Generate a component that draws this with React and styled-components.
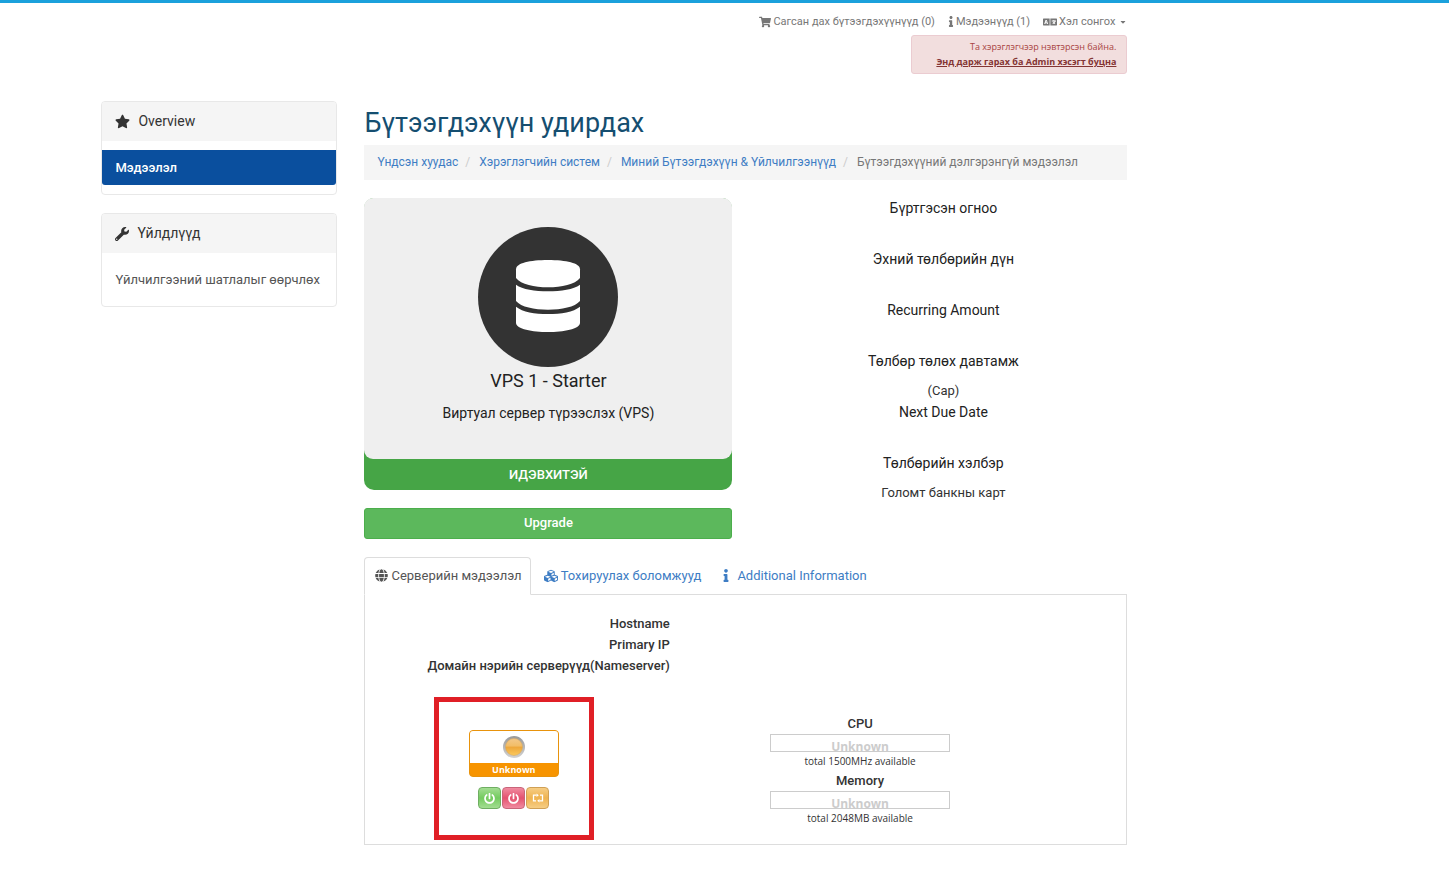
import styled, { createGlobalStyle } from "styled-components"
import { FaShoppingCart, FaInfo, FaLanguage, FaStar, FaWrench, FaGlobe, FaCubes, FaPowerOff, FaCaretDown } from "react-icons/fa"

const GlobalStyle = createGlobalStyle`
    * {
        box-sizing: border-box;
    }
    body {
        margin: 0;
        background: #fff;
        color: #333;
        font-family: Roboto, "Liberation Sans", sans-serif;
        font-size: 13px;
        line-height: 21px;
    }
    a {
        text-decoration: none;
    }
    button {
        font-family: inherit;
        cursor: pointer;
    }
`

const Page = styled.div`
    border-top: 3px solid #1ba1dc;
    padding: 0 20px 32px 7%;
`

const Container = styled.div`
    max-width: 1026px;
`

const Header = styled.header`
    display: flex;
    flex-direction: column;
    align-items: flex-end;
    padding-top: 8px;
    margin-bottom: 27px;
`

const TopNav = styled.nav`
    display: flex;
    gap: 13px;
    margin-bottom: 3px;
`

const TopLink = styled.a`
    display: flex;
    align-items: center;
    gap: 2px;
    color: #777;
    font-size: 11px;
`

const InfoIcon = styled(FaInfo)`
    width: 6px;
`

const Caret = styled(FaCaretDown)`
    margin-left: 2px;
`

const AdminAlert = styled.div`
    width: 216px;
    padding: 3px 10px 4px;
    border: 1px solid #ebccd1;
    border-radius: 3px;
    background: #f2dede;
    color: #a94442;
    font-family: "Open Sans", "Noto Sans", sans-serif;
    font-size: 9px;
    line-height: 15px;
    text-align: right;
`

const AlertLink = styled.a`
    display: block;
    color: #843534;
    font-weight: 700;
    text-decoration: underline;
    white-space: nowrap;
`

const Layout = styled.div`
    display: grid;
    grid-template-columns: 236px minmax(0, 1fr);
    gap: 27px;
    align-items: start;
`

const Sidebar = styled.aside`
    display: flex;
    flex-direction: column;
    gap: 18px;
`

const Panel = styled.section`
    border: 1px solid #e8e8e8;
    border-radius: 4px;
    padding-bottom: 9px;
    overflow: hidden;
`

const PanelTitle = styled.h3`
    display: flex;
    align-items: center;
    gap: 8px;
    height: 39px;
    margin: 0 0 9px;
    padding: 0 13px;
    background: #f5f5f5;
    font-size: 14px;
    font-weight: 400;
`

const PanelItem = styled.a`
    display: block;
    padding: 7px 13px;
    border-radius: 0 0 3px 3px;
    background: ${(props) => (props.$active ? "#0a4f9e" : "transparent")};
    color: ${(props) => (props.$active ? "#fff" : "#555")};
    font-weight: ${(props) => (props.$active ? 500 : 400)};
`

const Title = styled.h1`
    margin: 0;
    color: #154e70;
    font-size: 27px;
    font-weight: 400;
    line-height: 44px;
`

const Breadcrumb = styled.ol`
    display: flex;
    margin: 0 0 18px;
    padding: 7px 13px;
    background: #f5f5f5;
    color: #777;
    font-size: 12px;
    list-style: none;
`

const Crumb = styled.li`
    & + &::before {
        content: "/";
        padding: 0 9px 0 7px;
        color: #ccc;
    }
    a {
        color: #3e7dc4;
    }
`

const Details = styled.div`
    display: grid;
    grid-template-columns: 1fr 1fr;
    gap: 27px;
    margin-bottom: 18px;
    text-align: center;
`

const Product = styled.div`
    margin-bottom: 18px;
    border-radius: 10px;
    background: #46a546;
`

const ProductIcon = styled.div`
    height: 261px;
    padding-top: 29px;
    border-radius: 9px;
    background: #efefef;
    svg {
        display: block;
        margin: 0 auto;
    }
`

const ProductName = styled.h3`
    margin: 4px 0 12px;
    color: #222;
    font-size: 18px;
    font-weight: 400;
    line-height: 20px;
`

const GroupName = styled.h4`
    margin: 0;
    color: #222;
    font-size: 14px;
    font-weight: 400;
    line-height: 20px;
`

const Status = styled.div`
    padding: 5px 0;
    color: #fff;
    font-weight: 500;
`

const UpgradeButton = styled.button`
    width: 100%;
    height: 31px;
    padding: 0 0 2px;
    border: 1px solid #4cae4c;
    border-radius: 3px;
    background: #5cb85c;
    color: #fff;
    font-size: 13px;
    font-weight: 500;
`

const Billing = styled.dl`
    margin: 0;
    dt {
        margin-bottom: 9px;
        color: #222;
        font-size: 14px;
        line-height: 20px;
    }
    dd {
        min-height: 22px;
        margin: 0;
    }
`

const Tabs = styled.nav`
    display: flex;
    gap: 2px;
    border-bottom: 1px solid #ddd;
`

const Tab = styled.a`
    display: flex;
    align-items: center;
    gap: ${(props) => props.$gap || 3}px;
    height: 38px;
    margin-bottom: -1px;
    padding: 0 8px 1px 10px;
    border: 1px solid;
    border-color: ${(props) => (props.$active ? "#ddd #ddd #fff" : "transparent transparent #ddd")};
    border-radius: 4px 4px 0 0;
    color: ${(props) => (props.$active ? "#555" : "#3e7dc4")};
`

const TabPanel = styled.div`
    padding: 18px 0 4px;
    border: 1px solid #ddd;
    border-top: 0;
`

const HostInfo = styled.dl`
    width: 40%;
    margin: 0 0 21px;
    text-align: right;
    font-weight: 500;
`

const Server = styled.div`
    display: grid;
    grid-template-columns: 39% 52%;
    justify-items: center;
`

const ControlBox = styled.div`
    display: flex;
    flex-direction: column;
    align-items: center;
    gap: 10px;
    width: 160px;
    height: 143px;
    padding-top: 28px;
    border: 5px solid #e01f26;
`

const StatusBox = styled.div`
    width: 90px;
    border: 1px solid #e8930c;
    border-radius: 4px;
    background: #f79400;
    color: #fff;
    font-family: "Open Sans", sans-serif;
    font-size: 9px;
    font-weight: 700;
    line-height: 13px;
    text-align: center;
    overflow: hidden;
`

const LampArea = styled.div`
    display: flex;
    justify-content: center;
    padding: 5px 0;
    background: #fff;
`

const Controls = styled.div`
    display: flex;
    gap: 1px;
`

const ControlButton = styled.button`
    display: flex;
    align-items: center;
    justify-content: center;
    width: 23px;
    height: 22px;
    padding: 0;
    border: 1px solid ${(props) => props.$edge};
    border-radius: 4px;
    background: linear-gradient(${(props) => props.$light}, ${(props) => props.$dark} 50%, ${(props) => props.$light});
    color: #fff;
`

const Usage = styled.div`
    width: 180px;
    padding-top: 16px;
    text-align: center;
`

const UsageLabel = styled.div`
    font-weight: 500;
`

const UsageBar = styled.div`
    display: flex;
    align-items: flex-end;
    justify-content: center;
    height: 18px;
    border: 1px solid #ccc;
    color: #ccc;
    font-family: "Open Sans", sans-serif;
    font-size: 12px;
    font-weight: 700;
    line-height: 9px;
`

const UsageTotal = styled.div`
    font-family: "Open Sans", sans-serif;
    font-size: 10px;
    line-height: 18px;
`

const billing = [
    ["Бүртгэсэн огноо", ""],
    ["Эхний төлбөрийн дүн", ""],
    ["Recurring Amount", ""],
    ["Төлбөр төлөх давтамж", "(Сар)"],
    ["Next Due Date", ""],
    ["Төлбөрийн хэлбэр", "Голомт банкны карт"],
]

const usage = [
    { label: "CPU", total: "total 1500MHz available" },
    { label: "Memory", total: "total 2048MB available" },
]

function DatabaseIcon() {
    return (
        <svg width="140" height="140" viewBox="0 0 420 420">
            <circle cx="210" cy="210" r="210" fill="#333" />
            <g fill="#fff">
                <path d="M114 127C114 108 156 99 210 99S306 108 306 127V153C291 172 251 181 210 181S129 172 114 153Z" />
                <path d="M114 173C134 187 170 193 210 193S286 187 306 173V222C291 240 251 248 210 248S129 240 114 222Z" />
                <path d="M114 239C134 255 170 261 210 261S286 255 306 239V287C306 306 256 315 210 315S114 306 114 287Z" />
            </g>
        </svg>
    )
}

function Lamp() {
    return (
        <svg width="22" height="22" viewBox="0 0 22 22">
            <defs>
                <linearGradient id="lampRing" x1="0" y1="0" x2="0" y2="1">
                    <stop offset="0" stopColor="#999" />
                    <stop offset="1" stopColor="#d2d2d2" />
                </linearGradient>
                <linearGradient id="lampGlass" x1="0" y1="0" x2="0" y2="1">
                    <stop offset="0" stopColor="#f3c88a" />
                    <stop offset="0.45" stopColor="#f2bd66" />
                    <stop offset="0.5" stopColor="#eda63a" />
                    <stop offset="1" stopColor="#fbc95c" />
                </linearGradient>
            </defs>
            <circle cx="11" cy="11" r="11" fill="url(#lampRing)" />
            <circle cx="11" cy="11" r="8.5" fill="url(#lampGlass)" stroke="#d6a65c" strokeWidth="0.5" />
        </svg>
    )
}

function RebootIcon() {
    return (
        <svg width="12" height="10" viewBox="0 0 12 10" fill="none" stroke="#fff" strokeWidth="1.3">
            <path d="M4 7.8H1.5V2.2H4.5M8 2.2H10.5V7.8H7.5" />
            <path d="M4.5 0.4L6.8 2.2L4.5 4ZM7.5 6L5.2 7.8L7.5 9.6Z" fill="#fff" stroke="none" />
        </svg>
    )
}

export default function App() {
    return (
        <>
        <GlobalStyle />
        <Page>
        <Container>
            <Header>
                <TopNav>
                    <TopLink href="#cart"><FaShoppingCart size={12} />Сагсан дах бүтээгдэхүүнүүд (0)</TopLink>
                    <TopLink href="#news"><InfoIcon size={11} />Мэдээнүүд (1)</TopLink>
                    <TopLink href="#language"><FaLanguage size={14} />Хэл сонгох<Caret size={8} /></TopLink>
                </TopNav>
                <AdminAlert>
                    Та хэрэглэгчээр нэвтэрсэн байна.
                    <AlertLink href="#admin">Энд дарж гарах ба Admin хэсэгт буцна</AlertLink>
                </AdminAlert>
            </Header>
            <Layout>
                <Sidebar>
                    <Panel>
                        <PanelTitle><FaStar size={15} />Overview</PanelTitle>
                        <PanelItem href="#info" $active>Мэдээлэл</PanelItem>
                    </Panel>
                    <Panel>
                        <PanelTitle><FaWrench size={14} />Үйлдлүүд</PanelTitle>
                        <PanelItem href="#upgrade">Үйлчилгээний шатлалыг өөрчлөх</PanelItem>
                    </Panel>
                </Sidebar>
                <main>
                    <Title>Бүтээгдэхүүн удирдах</Title>
                    <Breadcrumb>
                        <Crumb><a href="#home">Үндсэн хуудас</a></Crumb>
                        <Crumb><a href="#client">Хэрэглэгчийн систем</a></Crumb>
                        <Crumb><a href="#products">Миний Бүтээгдэхүүн &amp; Үйлчилгээнүүд</a></Crumb>
                        <Crumb>Бүтээгдэхүүний дэлгэрэнгүй мэдээлэл</Crumb>
                    </Breadcrumb>
                    <Details>
                        <div>
                            <Product>
                                <ProductIcon>
                                    <DatabaseIcon />
                                    <ProductName>VPS 1 - Starter</ProductName>
                                    <GroupName>Виртуал сервер түрээслэх (VPS)</GroupName>
                                </ProductIcon>
                                <Status>ИДЭВХИТЭЙ</Status>
                            </Product>
                            <UpgradeButton type="button">Upgrade</UpgradeButton>
                        </div>
                        <Billing>
                            {billing.map(([label, value]) => (
                                <div key={label}>
                                    <dt>{label}</dt>
                                    <dd>{value}</dd>
                                </div>
                            ))}
                        </Billing>
                    </Details>
                    <Tabs>
                        <Tab href="#server" $active><FaGlobe size={13} />Серверийн мэдээлэл</Tab>
                        <Tab href="#options"><FaCubes size={14} />Тохируулах боломжууд</Tab>
                        <Tab href="#additional" $gap={8}><InfoIcon size={13} />Additional Information</Tab>
                    </Tabs>
                    <TabPanel>
                        <HostInfo>
                            <dt>Hostname</dt>
                            <dt>Primary IP</dt>
                            <dt>Домайн нэрийн серверүүд(Nameserver)</dt>
                        </HostInfo>
                        <Server>
                            <ControlBox>
                                <StatusBox>
                                    <LampArea><Lamp /></LampArea>
                                    Unknown
                                </StatusBox>
                                <Controls>
                                    <ControlButton type="button" aria-label="Start" $edge="#6fae62" $light="#a3dd92" $dark="#74cb5f"><FaPowerOff size={11} /></ControlButton>
                                    <ControlButton type="button" aria-label="Stop" $edge="#c9657a" $light="#f08ba0" $dark="#e4526f"><FaPowerOff size={11} /></ControlButton>
                                    <ControlButton type="button" aria-label="Reboot" $edge="#d0a055" $light="#f6cd84" $dark="#efb350"><RebootIcon /></ControlButton>
                                </Controls>
                            </ControlBox>
                            <Usage>
                                {usage.map((item) => (
                                    <div key={item.label}>
                                        <UsageLabel>{item.label}</UsageLabel>
                                        <UsageBar>Unknown</UsageBar>
                                        <UsageTotal>{item.total}</UsageTotal>
                                    </div>
                                ))}
                            </Usage>
                        </Server>
                    </TabPanel>
                </main>
            </Layout>
        </Container>
        </Page>
        </>
    )
}
